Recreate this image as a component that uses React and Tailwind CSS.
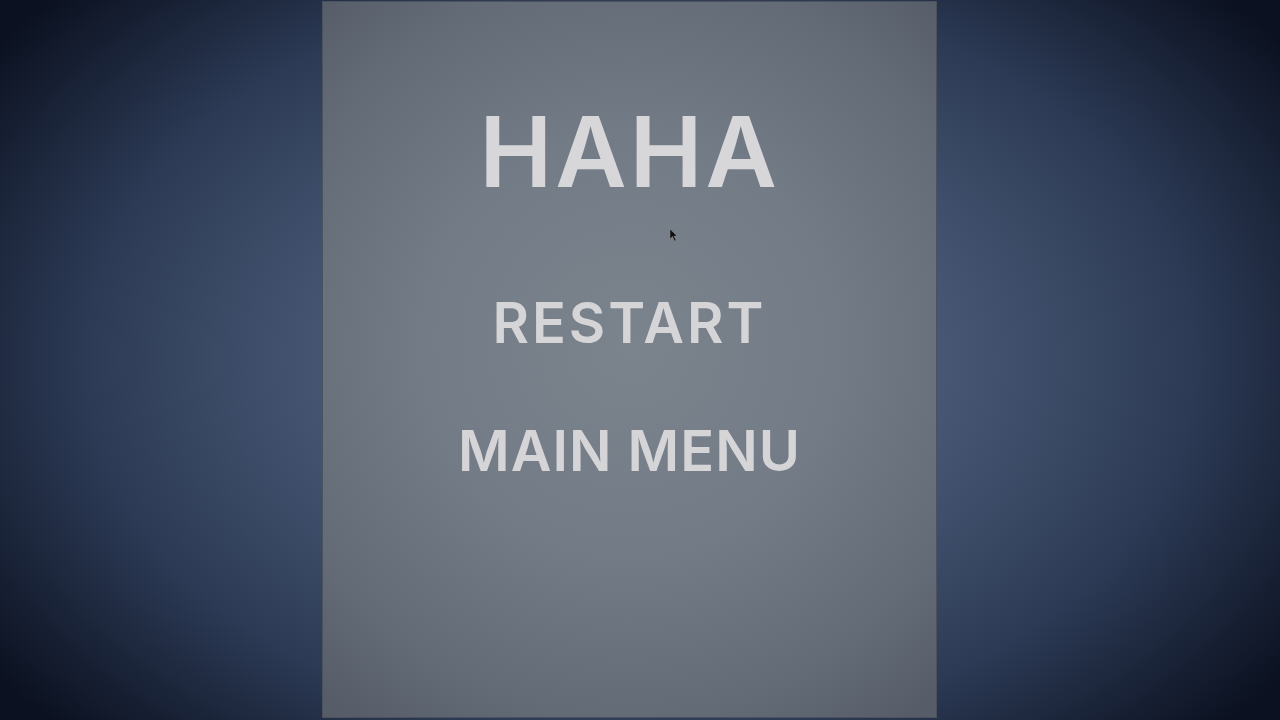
export default function App() {
  return (
    <div className="w-[1280px] h-[720px] overflow-hidden relative flex bg-[radial-gradient(ellipse_62%_75%_at_50%_50%,#56667f_0%,#4a5a76_35%,#2c3a55_70%,#0b1120_100%)]" style={{ fontFamily: 'Inter, "Liberation Sans", Arial, sans-serif' }}>
      <div className="ml-[322px] mt-[1px] w-[615px] h-[717px] border border-[#4b525d] bg-[radial-gradient(ellipse_75%_65%_at_50%_48%,#7b838d_0%,#737b86_45%,#636b76_80%,#565d68_100%)] flex flex-col items-center pt-[101px]">
        <div className="text-[98px] leading-none font-semibold text-[#d7d7d9] tracking-[3px]">HAHA</div>
        <div className="mt-[94px] text-[56px] leading-none font-semibold text-[#d5d5d7] tracking-[3px]">RESTART</div>
        <div className="mt-[72px] text-[56px] leading-none font-semibold text-[#d5d5d7] tracking-[1px]">MAIN MENU</div>
      </div>
      <svg className="absolute left-[669px] top-[228px]" width="9" height="14" viewBox="0 0 9 14">
        <path d="M1 1 L1 11 L3.5 8.5 L5.5 13 L7 12.3 L5 8 L8 8 Z" fill="#111" stroke="#888" strokeWidth="0.5" />
      </svg>
    </div>
  );
}
